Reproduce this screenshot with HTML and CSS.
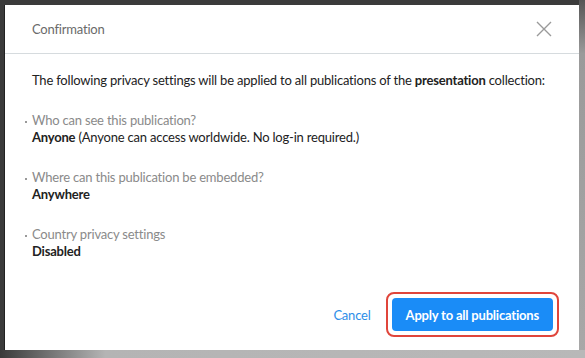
FILE: index.html
```
<!DOCTYPE html>
<html lang="en">
<head>
    <meta charset="UTF-8">
    <meta name="viewport" content="width=device-width, initial-scale=1.0">
    <title>Confirmation</title>
    <link rel="stylesheet" href="styles.css">
</head>
<body>
    <div class="dialog">
        <div class="dialog-header">
            <span class="dialog-title">Confirmation</span>
            <button class="close-btn" aria-label="Close">
                <svg width="16" height="16" viewBox="0 0 16 16">
                    <path d="M1 1 L15 15 M15 1 L1 15" stroke="#9a9a9a" stroke-width="1.4" fill="none"/>
                </svg>
            </button>
        </div>

        <div class="dialog-body">
            <p class="intro">The following privacy settings will be applied to all publications of the <b>presentation</b> collection:</p>

            <ul class="settings">
                <li>
                    <div class="setting-label">Who can see this publication?</div>
                    <div class="setting-value"><b>Anyone</b> (Anyone can access worldwide. No log-in required.)</div>
                </li>
                <li>
                    <div class="setting-label">Where can this publication be embedded?</div>
                    <div class="setting-value"><b>Anywhere</b></div>
                </li>
                <li>
                    <div class="setting-label">Country privacy settings</div>
                    <div class="setting-value"><b>Disabled</b></div>
                </li>
            </ul>
        </div>

        <div class="dialog-footer">
            <a class="cancel" href="#">Cancel</a>
            <div class="highlight">
                <button class="btn-primary">Apply to all publications</button>
            </div>
        </div>
    </div>
</body>
</html>
```

FILE: styles.css
```
html, body {
    margin: 0;
    height: 358px;
    overflow: hidden;
}
body {
    font-family: Lato, "Liberation Sans", sans-serif;
    letter-spacing: -0.2px;
    padding: 5px 6px 8px 4px;
    box-sizing: border-box;
    background:
        linear-gradient(to right, #3a3a3a 0%, #b4b4b4 18%, #b8b8b8 100%) bottom / 100% 8px no-repeat,
        linear-gradient(to bottom, #555 0%, #9a9a9a 15%, #a8a8a8 100%) right / 6px 100% no-repeat,
        #3b3b3b;
}
.dialog {
    height: 345px;
    background: white;
    border-left: 1px solid #222;
    box-sizing: border-box;
    display: flex;
    flex-direction: column;
}
.dialog-header {
    height: 48px;
    border-bottom: 1px solid #d6dbde;
    display: flex;
    align-items: center;
    justify-content: space-between;
    padding: 0 27px 0 27px;
}
.dialog-title {
    font-size: 13px;
    color: #6a6a6a;
}
.close-btn {
    border: none;
    background: none;
    padding: 0;
    width: 16px;
    height: 16px;
    display: flex;
}
.dialog-body {
    padding: 18px 27px 0 27px;
    flex: 1;
}
.intro {
    margin: 0;
    font-size: 13px;
    line-height: 17px;
    color: #222;
    white-space: nowrap;
}
.intro b {
    font-weight: 700;
}
.settings {
    list-style: none;
    margin: 23px 0 0 0;
    padding: 0;
}
.settings li {
    margin-bottom: 23px;
    font-size: 13px;
    line-height: 17px;
}
.setting-label {
    color: #8a8a8a;
    position: relative;
}
.setting-label::before {
    content: "";
    position: absolute;
    left: -7px;
    top: 9px;
    width: 2px;
    height: 2px;
    background: #999;
}
.setting-value {
    color: #222;
}
.setting-value b {
    font-weight: 700;
}
.dialog-footer {
    display: flex;
    justify-content: flex-end;
    align-items: center;
    gap: 15px;
    padding: 0 20px 13px 0;
}
.cancel {
    font-size: 13px;
    color: #2d8ee8;
    text-decoration: none;
}
.highlight {
    border: 2px solid #e0453b;
    border-radius: 8px;
    padding: 4px;
}
.btn-primary {
    background: #1a8cf7;
    color: white;
    border: none;
    border-radius: 4px;
    font-family: inherit;
    letter-spacing: inherit;
    font-size: 13px;
    font-weight: 700;
    height: 33px;
    padding: 0 14px;
    display: block;
}
```
